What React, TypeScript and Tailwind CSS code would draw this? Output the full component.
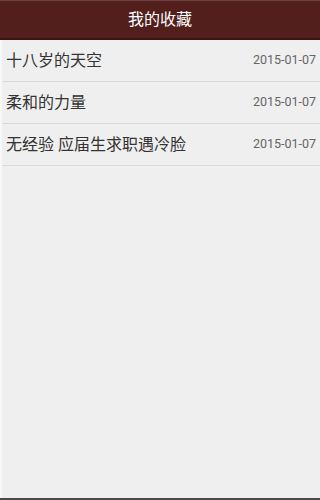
const items = [
  { title: "十八岁的天空", date: "2015-01-07" },
  { title: "柔和的力量", date: "2015-01-07" },
  { title: "无经验 应届生求职遇冷脸", date: "2015-01-07" },
];

export default function App() {
  return (
    <div
      className="w-[320px] h-[500px] flex flex-col bg-[#efefef] border-b-2 border-b-[#4a4a4a]"
      style={{ fontFamily: "Roboto, 'Noto Sans CJK SC', sans-serif" }}
    >
      {/* Header */}
      <div className="h-[40px] shrink-0 flex items-center justify-center bg-[#521f1d] border-t border-t-[#6a4240] border-b-2 border-b-[#3e1513]">
        <span className="text-white text-[16px]">我的收藏</span>
      </div>

      {/* List */}
      <div className="flex-1 border-l-2 border-l-[#f8f8f8]">
        {items.map((item) => (
          <div
            key={item.title}
            className="h-[42px] flex items-center justify-between pl-[4px] pr-[4px] border-b border-b-[#dadada]"
          >
            <span className="text-[16px] text-[#333333]">{item.title}</span>
            <span className="text-[12.5px] text-[#666666]">{item.date}</span>
          </div>
        ))}
      </div>
    </div>
  );
}
